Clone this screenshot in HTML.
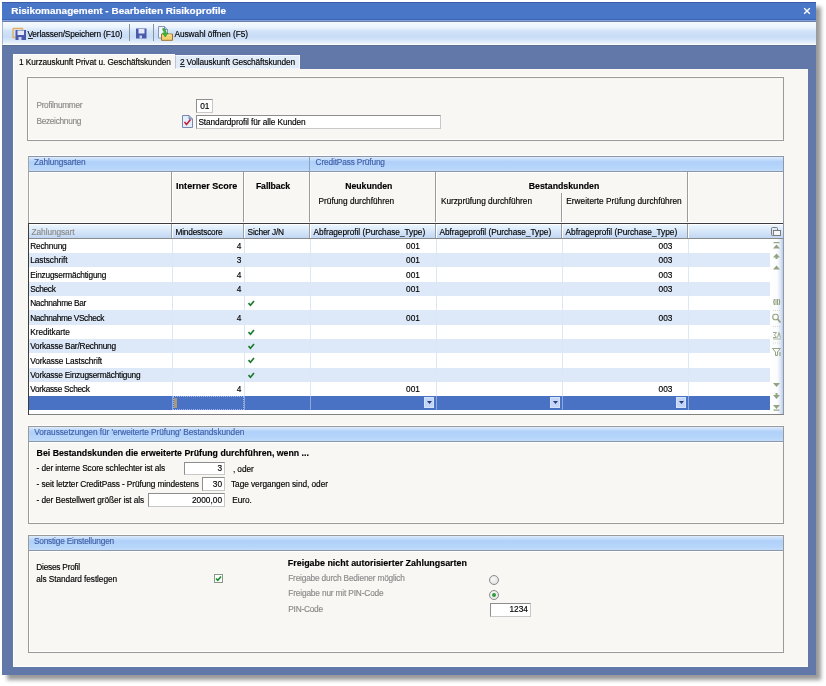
<!DOCTYPE html>
<html><head><meta charset="utf-8">
<style>
*{margin:0;padding:0;box-sizing:border-box}
html,body{width:826px;height:686px;background:#fff;overflow:hidden}
body{font-family:"Liberation Sans",sans-serif;font-size:8.1px;color:#000;position:relative}
.a{position:absolute}
.t{position:absolute;white-space:nowrap;line-height:12px;-webkit-text-stroke:0.15px currentColor}
.b{font-weight:bold;font-size:8.7px}
#win{left:2px;top:2px;width:814px;height:673px;background:#6278a8;box-shadow:5px 5px 4px rgba(0,0,0,0.4)}
#title{left:2px;top:2px;width:814px;height:18px;background:#4a76c8;border-top:1px solid #3a5ca8;border-bottom:1px solid #3f63b4}
#tline{left:2px;top:20px;width:814px;height:2px;background:linear-gradient(#84a2dc 50%,#6a80aa 50%)}
#toolbar{left:2px;top:22px;width:814px;height:23px;background:linear-gradient(#f4faff 0%,#ecf5fe 22%,#d2e3f8 42%,#c8dcf6 68%,#dae8f9 85%,#eef5fe 100%);border-bottom:1px solid #fbfdff;border-left:1px solid #a4b4cc}
#panel{left:13px;top:69px;width:795px;height:598px;background:#f8f7f3;border-left:1px solid #fff;border-bottom:1px solid #fff}
.box{position:absolute;border:1px solid #9a9a98;background:#f8f7f3;box-shadow:inset 1px -1px #fff,0 -1px #fff}
.band{position:absolute;left:0;right:0;top:0;height:15px;background:linear-gradient(#eaf3fe,#c2d9f7);border-bottom:1px solid #8aa0c0;color:#3f5fa8}
.r{text-align:right}
.dd{width:10px;height:11px;background:#c4d6f8;border:1px solid #d4e2fa}
.inp{position:absolute;background:#fff;border:1px solid #8e8e8e;border-right-color:#c8c8c8;border-bottom-color:#c8c8c8}
</style></head><body><div id="root" style="position:absolute;left:0;top:0;width:826px;height:686px;will-change:transform;background:#fff">
<div id="win" class="a"></div>
<div id="title" class="a"></div>
<div id="tline" class="a"></div>
<div id="toolbar" class="a"></div>
<div class="a" style="left:3px;top:45px;width:813px;height:1px;background:#5c6d94"></div>
<!-- toolbar items -->
<div class="a" style="left:129px;top:24px;width:1px;height:17px;background:#8a929e"></div>
<div class="a" style="left:153px;top:24px;width:1px;height:17px;background:#8a929e"></div>
<svg class="a" style="left:12px;top:27px" width="15" height="14" viewBox="0 0 15 14">
 <path d="M1 1.5 H10.5 V3 M1 1.5 V10.5 H3.5" fill="none" stroke="#e0b060" stroke-width="1.4"/>
 <rect x="3.5" y="3" width="10.5" height="10" fill="#4a5aaa"/>
 <rect x="5.5" y="3.5" width="6.5" height="4.5" fill="#e4e8fa"/>
 <rect x="6.5" y="10" width="3" height="3" fill="#c8d0f0"/>
</svg>
<svg class="a" style="left:136px;top:28px" width="11" height="11" viewBox="0 0 11 11">
 <rect x="0" y="0.5" width="10.5" height="10" fill="#4a5aaa"/>
 <rect x="2.5" y="1" width="6" height="4.5" fill="#e4e8fa"/>
 <rect x="3.5" y="7.5" width="2.5" height="3" fill="#c8d0f0"/>
</svg>
<svg class="a" style="left:157px;top:25px" width="17" height="16" viewBox="0 0 17 16">
 <path d="M1.5 1.5 H7.5 L10.5 4.5 V13 H1.5 Z" fill="#f0f4fc" stroke="#8a94b0" stroke-width="1"/>
 <path d="M7.5 1.5 V4.5 H10.5" fill="#b8c8e8" stroke="#6a80b8" stroke-width="0.8"/>
 <path d="M4.5 9 H15.5 V15.3 H4.5 Z" fill="#f4d070" stroke="#9a7430" stroke-width="1"/>
 <path d="M5.5 10 H14.5" stroke="#fae8a8" stroke-width="1"/>
 <path d="M5.8 3.2 Q9.2 3.6 9.2 8 L11 8 L8.2 12 L5.4 8 L7.2 8 Q7.2 5.6 5.8 5.4 Z" fill="#3cb838" stroke="#288a28" stroke-width="0.5"/>
</svg>

<!-- tabs -->
<div class="a" style="left:13px;top:54px;width:162px;height:16px;background:#f8f7f3;border-top:1px solid #fff;border-left:1px solid #fff"></div>
<div class="a" style="left:175px;top:55px;width:125px;height:14px;background:#e2ecf9;border:1px solid #f4f8fe;border-left-color:#b8c4d8"></div>

<div id="panel" class="a"></div>

<!-- profile box -->
<div class="box" style="left:27px;top:77px;width:757px;height:64px"></div>
<div class="inp" style="left:196px;top:99px;width:17px;height:14px"></div>
<div class="inp" style="left:196px;top:115px;width:245px;height:14px"></div>


<!-- grid -->
<div class="a" style="left:28px;top:156px;width:756px;height:259px;background:#fff;border:1px solid #8c98a8;border-bottom-color:#808080;box-shadow:0 -1px #fff"></div>
<div class="a" style="left:28px;top:156px;width:1px;height:68px;background:#a4a4a4"></div>
<div class="a" style="left:28px;top:223px;width:1px;height:192px;background:#3c3c3c"></div>
<div class="a" style="left:29px;top:157px;width:754px;height:14px;background:linear-gradient(#e0ecfc 0%,#c8e0fa 14%,#b0d0fa 35%,#b6d6fa 80%,#c6dcf8 100%)"></div>
<div class="a" style="left:29px;top:171px;width:754px;height:1px;background:#8a98ac"></div>
<div class="a" style="left:309px;top:157px;width:1px;height:14px;background:#8ea2c0"></div>
<div class="a" style="left:29px;top:172px;width:754px;height:51px;background:linear-gradient(#fff 0,#fff 1px,#f8f7f3 1px)"></div>
<div class="a" style="left:171px;top:172px;width:2px;height:51px;background:linear-gradient(90deg,#9c9c9c 50%,#fff 50%)"></div>
<div class="a" style="left:243px;top:172px;width:2px;height:51px;background:linear-gradient(90deg,#9c9c9c 50%,#fff 50%)"></div>
<div class="a" style="left:309px;top:172px;width:2px;height:51px;background:linear-gradient(90deg,#9c9c9c 50%,#fff 50%)"></div>
<div class="a" style="left:435px;top:172px;width:2px;height:51px;background:linear-gradient(90deg,#9c9c9c 50%,#fff 50%)"></div>
<div class="a" style="left:561px;top:193px;width:2px;height:30px;background:linear-gradient(90deg,#9c9c9c 50%,#fff 50%)"></div>
<div class="a" style="left:687px;top:172px;width:2px;height:51px;background:linear-gradient(90deg,#9c9c9c 50%,#fff 50%)"></div>
<div class="a" style="left:29px;top:222px;width:754px;height:1px;background:#fff"></div>
<div class="a" style="left:29px;top:172px;width:1px;height:51px;background:#fff"></div>
<div class="a" style="left:29px;top:223px;width:754px;height:1px;background:#3c3c3c"></div>
<div class="a" style="left:29px;top:224px;width:754px;height:14px;background:linear-gradient(#fff 0,#fff 1px,#eaf5fe 1px,#c2d7f4)"></div>
<div class="a" style="left:29px;top:238px;width:754px;height:1px;background:#8a8a8a"></div>
<div class="a" style="left:171px;top:224px;width:2px;height:14px;background:linear-gradient(90deg,#9c9c9c 50%,#fff 50%)"></div>
<div class="a" style="left:243px;top:224px;width:2px;height:14px;background:linear-gradient(90deg,#9c9c9c 50%,#fff 50%)"></div>
<div class="a" style="left:309px;top:224px;width:2px;height:14px;background:linear-gradient(90deg,#9c9c9c 50%,#fff 50%)"></div>
<div class="a" style="left:435px;top:224px;width:2px;height:14px;background:linear-gradient(90deg,#9c9c9c 50%,#fff 50%)"></div>
<div class="a" style="left:561px;top:224px;width:2px;height:14px;background:linear-gradient(90deg,#9c9c9c 50%,#fff 50%)"></div>
<div class="a" style="left:687px;top:224px;width:2px;height:14px;background:linear-gradient(90deg,#9c9c9c 50%,#fff 50%)"></div>
<div class="a" style="left:29px;top:239px;width:741px;height:14px;background:#ffffff"></div>
<div class="a" style="left:29px;top:253px;width:741px;height:14px;background:#dde9f9"></div>
<div class="a" style="left:29px;top:267px;width:741px;height:15px;background:#ffffff"></div>
<div class="a" style="left:29px;top:282px;width:741px;height:14px;background:#dde9f9"></div>
<div class="a" style="left:29px;top:296px;width:741px;height:14px;background:#ffffff"></div>
<svg class="a" style="left:247px;top:299px" width="9" height="8" viewBox="0 0 9 8"><path d="M1.5 4.2 L3.5 6.3 L7 2" fill="none" stroke="#1c7c2c" stroke-width="1.7"/></svg>
<div class="a" style="left:29px;top:310px;width:741px;height:15px;background:#dde9f9"></div>
<div class="a" style="left:29px;top:325px;width:741px;height:14px;background:#ffffff"></div>
<svg class="a" style="left:247px;top:328px" width="9" height="8" viewBox="0 0 9 8"><path d="M1.5 4.2 L3.5 6.3 L7 2" fill="none" stroke="#1c7c2c" stroke-width="1.7"/></svg>
<div class="a" style="left:29px;top:339px;width:741px;height:14px;background:#dde9f9"></div>
<svg class="a" style="left:247px;top:342px" width="9" height="8" viewBox="0 0 9 8"><path d="M1.5 4.2 L3.5 6.3 L7 2" fill="none" stroke="#1c7c2c" stroke-width="1.7"/></svg>
<div class="a" style="left:29px;top:353px;width:741px;height:15px;background:#ffffff"></div>
<svg class="a" style="left:247px;top:356px" width="9" height="8" viewBox="0 0 9 8"><path d="M1.5 4.2 L3.5 6.3 L7 2" fill="none" stroke="#1c7c2c" stroke-width="1.7"/></svg>
<div class="a" style="left:29px;top:368px;width:741px;height:14px;background:#dde9f9"></div>
<svg class="a" style="left:247px;top:371px" width="9" height="8" viewBox="0 0 9 8"><path d="M1.5 4.2 L3.5 6.3 L7 2" fill="none" stroke="#1c7c2c" stroke-width="1.7"/></svg>
<div class="a" style="left:29px;top:382px;width:741px;height:14px;background:#ffffff"></div>
<div class="a" style="left:29px;top:396px;width:741px;height:14px;background:#4a72c4"></div>
<div class="a" style="left:172px;top:239px;width:1px;height:157px;background:#dde6f3"></div>
<div class="a" style="left:172px;top:396px;width:1px;height:14px;background:#8ea6d8"></div>
<div class="a" style="left:244px;top:239px;width:1px;height:157px;background:#dde6f3"></div>
<div class="a" style="left:244px;top:396px;width:1px;height:14px;background:#8ea6d8"></div>
<div class="a" style="left:310px;top:239px;width:1px;height:157px;background:#dde6f3"></div>
<div class="a" style="left:310px;top:396px;width:1px;height:14px;background:#8ea6d8"></div>
<div class="a" style="left:436px;top:239px;width:1px;height:157px;background:#dde6f3"></div>
<div class="a" style="left:436px;top:396px;width:1px;height:14px;background:#8ea6d8"></div>
<div class="a" style="left:562px;top:239px;width:1px;height:157px;background:#dde6f3"></div>
<div class="a" style="left:562px;top:396px;width:1px;height:14px;background:#8ea6d8"></div>
<div class="a" style="left:688px;top:239px;width:1px;height:157px;background:#dde6f3"></div>
<div class="a" style="left:688px;top:396px;width:1px;height:14px;background:#8ea6d8"></div>
<div class="a dd" style="left:424px;top:397px"></div>
<svg class="a" style="left:427px;top:401px" width="5" height="3" viewBox="0 0 5 3"><path d="M0 0 H5 L2.5 3 Z" fill="#2a3a80"/></svg>
<div class="a dd" style="left:550px;top:397px"></div>
<svg class="a" style="left:553px;top:401px" width="5" height="3" viewBox="0 0 5 3"><path d="M0 0 H5 L2.5 3 Z" fill="#2a3a80"/></svg>
<div class="a dd" style="left:676px;top:397px"></div>
<svg class="a" style="left:679px;top:401px" width="5" height="3" viewBox="0 0 5 3"><path d="M0 0 H5 L2.5 3 Z" fill="#2a3a80"/></svg>
<div class="a" style="left:173px;top:396px;width:71px;height:14px;border:1px dotted rgba(220,230,255,0.6)"></div>
<div class="a" style="left:174px;top:398px;width:3px;height:10px;background:#a49882"></div>
<div class="a" style="left:770px;top:239px;width:13px;height:175px;background:linear-gradient(90deg,#fff 0%,#fbfcfe 55%,#dfe8f6 80%,#bccde8 100%)"></div>
<svg class="a" style="left:770px;top:222px" width="14" height="192" viewBox="0 0 14 192">
 <g fill="#93a382" stroke="none">
  <rect x="3.5" y="20" width="6" height="1.2"/>
  <path d="M3 26.5 L6.5 22.5 L10 26.5 Z"/>
  <path d="M3 35.5 L6.5 31.5 L10 35.5 Z"/><rect x="5.5" y="35" width="2" height="2"/>
  <path d="M3 47.5 L6.5 43.5 L10 47.5 Z"/>
  <path d="M3 161 L6.5 165 L10 161 Z"/>
  <path d="M3 173 L6.5 177 L10 173 Z"/><rect x="5.5" y="171" width="2" height="2"/>
  <path d="M3 183 L6.5 187 L10 183 Z"/><rect x="3.5" y="187.5" width="6" height="1.2"/>
 </g>
 <g fill="none" stroke="#93a382">
  <path d="M4.5 77 Q3 80 4.5 83 M9 77 Q10.5 80 9 83" stroke-width="1.3"/>
  <path d="M6 77 V83 M7.5 77 V83" stroke-width="1"/>
  <circle cx="5.5" cy="95" r="2.8" stroke-width="1.1"/>
  <path d="M7.5 97 L10.5 100.5" stroke-width="1.8"/>
  <path d="M3 110.5 H6.5 L4.5 113 L6.5 115.5 H3" stroke-width="0.9"/>
  <path d="M7.5 115.5 L9 110.5 L10.5 115.5" stroke-width="0.9"/>
  <path d="M3 117 H11" stroke-width="0.8"/>
  <path d="M2.5 126.5 H10.5 L7.5 130 V133.5 H5.5 V130 Z" stroke-width="1"/>
  <path d="M10 130 V134" stroke-width="1.2"/>
 </g>
 <g fill="none" stroke="#c8d0c0" stroke-width="0.8" stroke-dasharray="1 1">
  <path d="M3 88.5 H11 M3 104.5 H11 M3 121 H11"/>
 </g>
 <rect x="1.5" y="5.5" width="6" height="8" rx="1" fill="none" stroke="#7c7c7c" stroke-width="1"/>
 <rect x="3.5" y="8.5" width="7" height="5" fill="#f4f6fa" stroke="#7c7c7c" stroke-width="1"/>
</svg>

<!-- Voraussetzungen -->
<div class="box" style="left:28px;top:426px;width:756px;height:98px"></div>
<div class="a" style="left:29px;top:427px;width:754px;height:15px;background:linear-gradient(#e0ecfc 0%,#c8e0fa 14%,#b0d0fa 35%,#b6d6fa 80%,#c6dcf8 100%);border-bottom:1px solid #8a98ac;box-shadow:0 1px #fff"></div>
<div class="inp" style="left:184px;top:462px;width:41px;height:13px"></div>
<div class="inp" style="left:202px;top:477px;width:23px;height:14px"></div>
<div class="inp" style="left:148px;top:493px;width:77px;height:14px"></div>

<!-- Sonstige -->
<div class="box" style="left:28px;top:535px;width:756px;height:118px"></div>
<div class="a" style="left:29px;top:536px;width:754px;height:15px;background:linear-gradient(#e0ecfc 0%,#c8e0fa 14%,#b0d0fa 35%,#b6d6fa 80%,#c6dcf8 100%);border-bottom:1px solid #8a98ac;box-shadow:0 1px #fff"></div>
<div class="a" style="left:214px;top:574px;width:9px;height:9px;background:#fff;border:1px solid #8a9a8a"></div>
<svg class="a" style="left:215px;top:575px" width="7" height="7" viewBox="0 0 7 7"><path d="M1 3.5 L2.8 5.3 L6 1.5" fill="none" stroke="#1c8a2c" stroke-width="1.6"/></svg>
<div class="a" style="left:489px;top:575px;width:10px;height:10px;border-radius:50%;background:radial-gradient(circle at 40% 40%,#fafafa,#d8d8d8);border:1px solid #8a8a8a"></div>
<div class="a" style="left:489px;top:590px;width:10px;height:10px;border-radius:50%;background:radial-gradient(circle at 40% 40%,#fafafa,#e0e0e0);border:1px solid #8a8a8a"></div>
<div class="a" style="left:492px;top:593px;width:4px;height:4px;border-radius:50%;background:#2c9c3c"></div>
<div class="inp" style="left:490px;top:603px;width:41px;height:14px"></div>

<svg class="a" style="left:803px;top:7px" width="8" height="8" viewBox="0 0 8 8"><path d="M1.2 1.2 L6.8 6.8 M6.8 1.2 L1.2 6.8" stroke="#fff" stroke-width="1.4"/></svg>
<div class="a" style="left:28px;top:38px;width:5px;height:1px;background:#333"></div>
<div class="a" style="left:180px;top:66px;width:5px;height:1px;background:#333"></div>
<svg class="a" style="left:182px;top:115px" width="11" height="13" viewBox="0 0 11 13">
 <path d="M0.5 0.5 H7 L10.5 4 V12.5 H0.5 Z" fill="#e2f0fc" stroke="#7a88b0" stroke-width="1"/>
 <path d="M7 0.5 V4 H10.5" fill="#9ab0d8" stroke="#6a7aa8" stroke-width="0.8"/>
 <path d="M2.5 7 L4.5 9.5 L8.5 4.5" fill="none" stroke="#c8203a" stroke-width="1.6"/>
</svg>
<div class="t" style="top:5.00px;font-size:9.98px;font-weight:bold;color:#fff;left:11.20px;">Risikomanagement - Bearbeiten Risikoprofile</div>
<div class="t" style="top:28.00px;font-size:8.3px;letter-spacing:-0.132px;left:27.40px;">Verlassen/Speichern (F10)</div>
<div class="t" style="top:28.00px;font-size:8.3px;letter-spacing:-0.024px;left:174.40px;">Auswahl öffnen (F5)</div>
<div class="t" style="top:56.00px;font-size:8.3px;letter-spacing:-0.08px;left:19.00px;">1 Kurzauskunft Privat u. Geschäftskunden</div>
<div class="t" style="top:56.00px;font-size:8.3px;letter-spacing:-0.113px;left:179.90px;">2 Vollauskunft Geschäftskunden</div>
<div class="t" style="top:99.00px;font-size:8.3px;letter-spacing:-0.286px;color:#8a8a8a;left:36.40px;">Profilnummer</div>
<div class="t" style="top:115.00px;font-size:8.3px;letter-spacing:-0.299px;color:#8a8a8a;left:36.40px;">Bezeichnung</div>
<div class="t" style="top:100.00px;font-size:8.3px;left:200.20px;">01</div>
<div class="t" style="top:116.00px;font-size:8.3px;letter-spacing:-0.087px;left:198.40px;">Standardprofil für alle Kunden</div>
<div class="t" style="top:156.00px;font-size:8.3px;letter-spacing:-0.114px;color:#3f5fa8;left:34.00px;">Zahlungsarten</div>
<div class="t" style="top:156.00px;font-size:8.3px;letter-spacing:-0.151px;color:#3f5fa8;left:315.60px;">CreditPass Prüfung</div>
<div class="t" style="top:180.00px;font-size:9.04px;font-weight:bold;left:176.10px;">Interner Score</div>
<div class="t" style="top:180.00px;font-size:8.7px;font-weight:bold;letter-spacing:-0.074px;left:255.90px;">Fallback</div>
<div class="t" style="top:180.00px;font-size:8.7px;font-weight:bold;letter-spacing:-0.034px;left:345.30px;">Neukunden</div>
<div class="t" style="top:195.00px;font-size:8.3px;letter-spacing:0.002px;left:318.50px;">Prüfung durchführen</div>
<div class="t" style="top:180.00px;font-size:8.75px;font-weight:bold;left:528.80px;">Bestandskunden</div>
<div class="t" style="top:195.00px;font-size:8.3px;letter-spacing:-0.028px;left:440.90px;">Kurzprüfung durchführen</div>
<div class="t" style="top:195.00px;font-size:8.3px;letter-spacing:0.005px;left:566.30px;">Erweiterte Prüfung durchführen</div>
<div class="t" style="top:226.00px;font-size:8.3px;letter-spacing:-0.083px;color:#8a8a8a;left:31.60px;">Zahlungsart</div>
<div class="t" style="top:226.00px;font-size:8.3px;letter-spacing:-0.196px;left:175.50px;">Mindestscore</div>
<div class="t" style="top:226.00px;font-size:8.3px;letter-spacing:-0.198px;left:247.60px;">Sicher J/N</div>
<div class="t" style="top:226.00px;font-size:8.3px;letter-spacing:-0.035px;left:313.60px;">Abfrageprofil (Purchase_Type)</div>
<div class="t" style="top:226.00px;font-size:8.3px;letter-spacing:-0.031px;left:439.50px;">Abfrageprofil (Purchase_Type)</div>
<div class="t" style="top:226.00px;font-size:8.3px;letter-spacing:-0.035px;left:565.60px;">Abfrageprofil (Purchase_Type)</div>
<div class="t" style="top:426.00px;font-size:8.3px;letter-spacing:-0.064px;color:#3f5fa8;left:34.30px;">Voraussetzungen für 'erweiterte Prüfung' Bestandskunden</div>
<div class="t" style="top:447.00px;font-size:8.76px;font-weight:bold;left:36.60px;">Bei Bestandskunden die erweiterte Prüfung durchführen, wenn ...</div>
<div class="t" style="top:462.00px;font-size:8.3px;letter-spacing:-0.103px;left:36.60px;">- der interne Score schlechter ist als</div>
<div class="t" style="top:478.00px;font-size:8.3px;letter-spacing:-0.102px;left:36.60px;">- seit letzter CreditPass - Prüfung mindestens</div>
<div class="t" style="top:494.00px;font-size:8.3px;letter-spacing:-0.085px;left:36.60px;">- der Bestellwert größer ist als</div>
<div class="t" style="top:463.00px;font-size:8.3px;letter-spacing:-0.065px;left:232.90px;">, oder</div>
<div class="t" style="top:478.00px;font-size:8.3px;letter-spacing:-0.054px;left:231.00px;">Tage vergangen sind, oder</div>
<div class="t" style="top:494.00px;font-size:8.3px;letter-spacing:-0.085px;left:232.30px;">Euro.</div>
<div class="t" style="top:462.00px;font-size:8.3px;left:217.38px;">3</div>
<div class="t" style="top:478.00px;font-size:8.3px;left:212.77px;">30</div>
<div class="t" style="top:494.00px;font-size:8.3px;left:192.00px;">2000,00</div>
<div class="t" style="top:535.00px;font-size:8.3px;letter-spacing:-0.197px;color:#3f5fa8;left:33.90px;">Sonstige Einstellungen</div>
<div class="t" style="top:561.00px;font-size:8.3px;letter-spacing:-0.232px;left:36.30px;">Dieses Profil</div>
<div class="t" style="top:573.00px;font-size:8.3px;letter-spacing:-0.085px;left:36.30px;">als Standard festlegen</div>
<div class="t" style="top:557.00px;font-size:8.92px;font-weight:bold;left:287.80px;">Freigabe nicht autorisierter Zahlungsarten</div>
<div class="t" style="top:572.00px;font-size:8.3px;letter-spacing:-0.182px;color:#8a8a8a;left:288.20px;">Freigabe durch Bediener möglich</div>
<div class="t" style="top:587.00px;font-size:8.3px;letter-spacing:-0.157px;color:#8a8a8a;left:288.30px;">Freigabe nur mit PIN-Code</div>
<div class="t" style="top:603.00px;font-size:8.3px;letter-spacing:-0.235px;color:#8a8a8a;left:288.30px;">PIN-Code</div>
<div class="t" style="top:603.00px;font-size:8.3px;left:509.43px;">1234</div>
<div class="t" style="top:240.00px;font-size:8.3px;letter-spacing:-0.192px;left:30.20px;">Rechnung</div>
<div class="t" style="top:240.00px;font-size:8.3px;left:236.77px;">4</div>
<div class="t" style="top:240.00px;font-size:8.3px;left:406.06px;">001</div>
<div class="t" style="top:240.00px;font-size:8.3px;left:658.56px;">003</div>
<div class="t" style="top:254.00px;font-size:8.3px;letter-spacing:-0.032px;left:30.20px;">Lastschrift</div>
<div class="t" style="top:254.00px;font-size:8.3px;left:236.77px;">3</div>
<div class="t" style="top:254.00px;font-size:8.3px;left:406.06px;">001</div>
<div class="t" style="top:254.00px;font-size:8.3px;left:658.56px;">003</div>
<div class="t" style="top:269.00px;font-size:8.3px;letter-spacing:-0.201px;left:30.20px;">Einzugsermächtigung</div>
<div class="t" style="top:269.00px;font-size:8.3px;left:236.77px;">4</div>
<div class="t" style="top:269.00px;font-size:8.3px;left:406.06px;">001</div>
<div class="t" style="top:269.00px;font-size:8.3px;left:658.56px;">003</div>
<div class="t" style="top:283.00px;font-size:8.3px;letter-spacing:-0.324px;left:30.20px;">Scheck</div>
<div class="t" style="top:283.00px;font-size:8.3px;left:236.77px;">4</div>
<div class="t" style="top:283.00px;font-size:8.3px;left:406.06px;">001</div>
<div class="t" style="top:283.00px;font-size:8.3px;left:658.56px;">003</div>
<div class="t" style="top:297.00px;font-size:8.3px;letter-spacing:-0.323px;left:30.20px;">Nachnahme Bar</div>
<div class="t" style="top:312.00px;font-size:8.3px;letter-spacing:-0.351px;left:30.20px;">Nachnahme VScheck</div>
<div class="t" style="top:312.00px;font-size:8.3px;left:236.77px;">4</div>
<div class="t" style="top:312.00px;font-size:8.3px;left:406.06px;">001</div>
<div class="t" style="top:312.00px;font-size:8.3px;left:658.56px;">003</div>
<div class="t" style="top:326.00px;font-size:8.3px;letter-spacing:-0.043px;left:30.20px;">Kreditkarte</div>
<div class="t" style="top:340.00px;font-size:8.3px;letter-spacing:-0.175px;left:30.20px;">Vorkasse Bar/Rechnung</div>
<div class="t" style="top:355.00px;font-size:8.3px;letter-spacing:-0.12px;left:30.20px;">Vorkasse Lastschrift</div>
<div class="t" style="top:369.00px;font-size:8.3px;letter-spacing:-0.214px;left:30.20px;">Vorkasse Einzugsermächtigung</div>
<div class="t" style="top:383.00px;font-size:8.3px;letter-spacing:-0.283px;left:30.20px;">Vorkasse Scheck</div>
<div class="t" style="top:383.00px;font-size:8.3px;left:236.77px;">4</div>
<div class="t" style="top:383.00px;font-size:8.3px;left:406.06px;">001</div>
<div class="t" style="top:383.00px;font-size:8.3px;left:658.56px;">003</div>
</div></body></html>
